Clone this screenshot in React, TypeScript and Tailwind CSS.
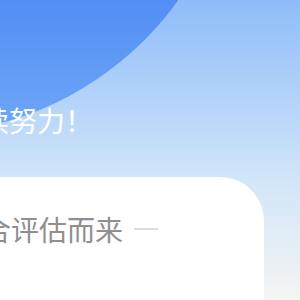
export default function App() {
  return (
    <div
      className="relative w-[300px] h-[300px] overflow-hidden bg-gradient-to-b from-[#8ebcf8] via-[#d2e6f8] via-60% to-[#f4f4f4]"
      style={{ fontFamily: '"Noto Sans CJK SC", "Noto Sans", sans-serif' }}
    >
      {/* decorative circle */}
      <div className="absolute left-[-402px] top-[-506px] w-[640px] h-[640px] rounded-full bg-gradient-to-b from-[#4582f3] from-70% to-[#70a8f6]" />

      <div className="relative flex flex-col">
        <div className="mt-[106px] ml-[-47px] text-[28px] leading-none text-white whitespace-nowrap">
          继续努力！
        </div>

        <div className="mt-[43px] mr-[36px] ml-[-80px] h-[200px] rounded-[44px] bg-white pl-[35px] pt-[38px]">
          <div className="flex items-center gap-[11px] whitespace-nowrap">
            <span className="text-[28px] leading-none text-[#8f8f8f]">综合评估而来</span>
            <span className="block w-[24px] h-[2px] bg-[#dcdcdc]" />
          </div>
        </div>
      </div>
    </div>
  );
}
